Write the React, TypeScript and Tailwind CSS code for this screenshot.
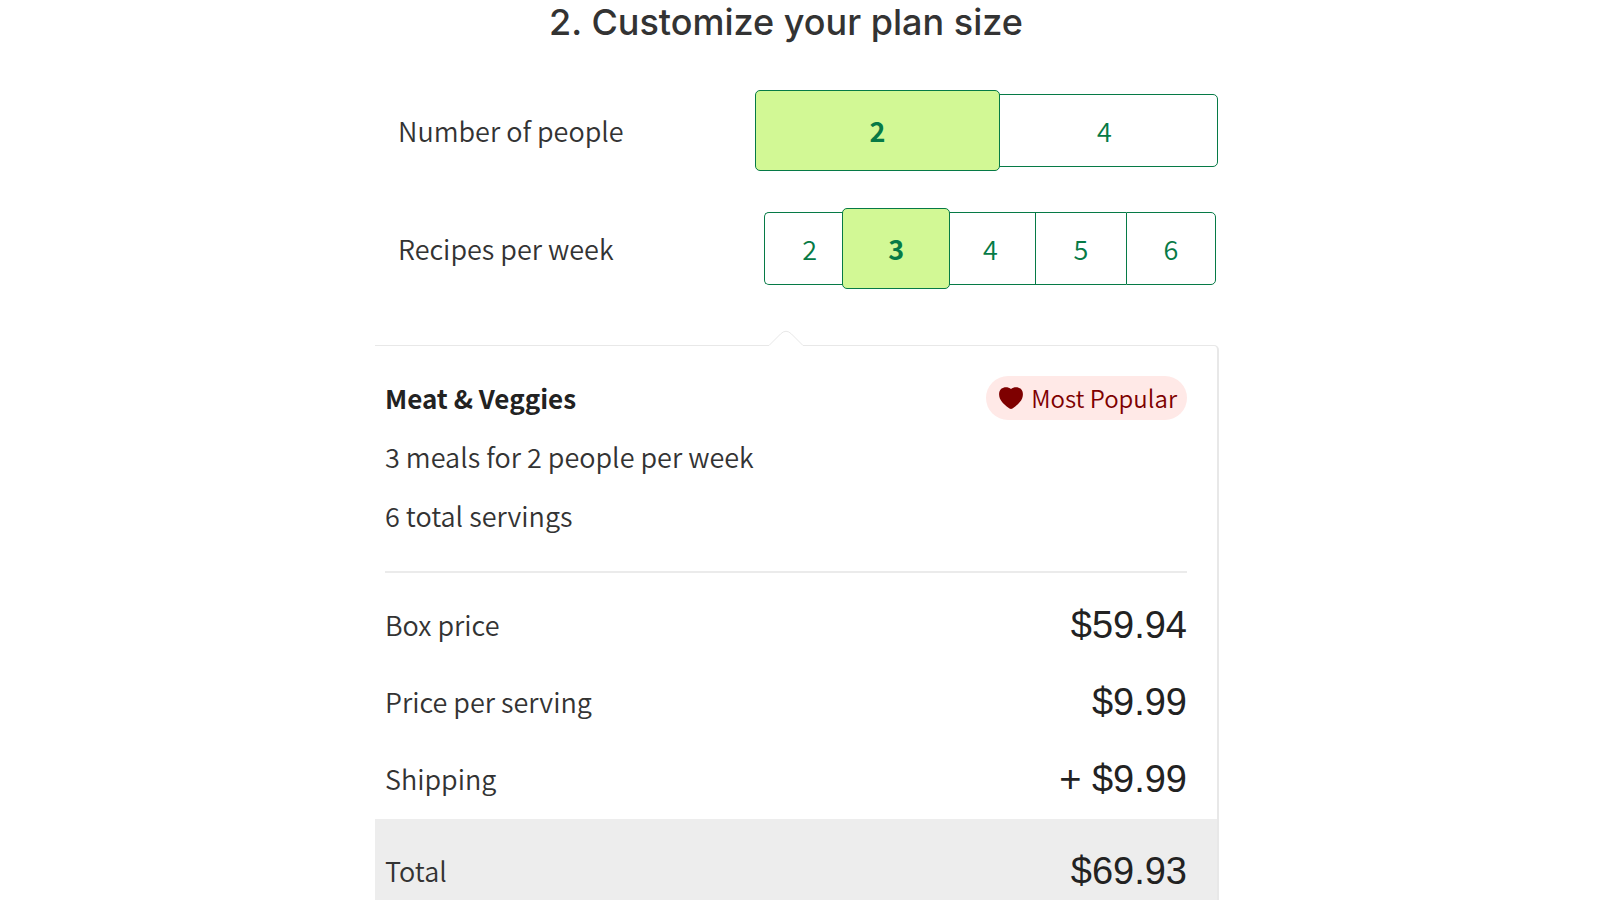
import { useState } from 'react';

const PEOPLE = [2, 4];
const RECIPES = [2, 3, 4, 5, 6];

const PRICES = [
  { label: 'Box price', value: '$59.94' },
  { label: 'Price per serving', value: '$9.99' },
  { label: 'Shipping', value: '+ $9.99' },
];

function PlanOptions({ label, name, options, value, onChange, barClass, selectedClass }) {
  return (
    <div role="radiogroup" aria-labelledby={`${name}-label`} className="flex items-center justify-between pl-[23px]">
      <span id={`${name}-label`}>{label}</span>
      <div className={`flex h-[73px] ${barClass}`}>
        {options.map((option) => {
          const selected = option === value;
          return (
            <div key={option} className="group flex min-w-0 flex-1">
              <label
                className={`relative flex flex-1 cursor-pointer items-center justify-center border-[#067a46] text-[#067a46] ${
                  selected
                    ? `z-10 -my-1 rounded-[5px] border bg-[#d2f895] font-bold ${selectedClass}`
                    : 'border-y border-l bg-white group-first:rounded-l-[5px] group-last:rounded-r-[5px] group-last:border-r'
                }`}
              >
                <input
                  type="radio"
                  name={name}
                  value={option}
                  checked={selected}
                  onChange={() => onChange(option)}
                  className="sr-only"
                />
                {option}
              </label>
            </div>
          );
        })}
      </div>
    </div>
  );
}

export default function App() {
  const [people, setPeople] = useState(2);
  const [recipes, setRecipes] = useState(3);

  return (
    <div className="min-h-screen bg-white pr-[6px] font-['Noto_Sans_CJK_SC',sans-serif] text-[27px] font-[350] leading-[40px] text-[#333]">
      <main className="mx-auto w-full max-w-[844px]">
        <h1 className="pr-[22px] text-center font-['Inter',sans-serif] text-[36px] font-medium leading-[44px] text-[#333]">
          2. Customize your plan size
        </h1>

        <div className="mt-[50px] flex flex-col gap-[45px]">
          <PlanOptions
            label="Number of people"
            name="people"
            options={PEOPLE}
            value={people}
            onChange={setPeople}
            barClass="w-[454px] mr-px"
            selectedClass="-mx-[9px]"
          />
          <PlanOptions
            label="Recipes per week"
            name="recipes"
            options={RECIPES}
            value={recipes}
            onChange={setRecipes}
            barClass="w-[452px] mr-[3px]"
            selectedClass="-ml-3 -mr-[5px]"
          />
        </div>

        {/* Summary */}
        <section className="relative mt-[60px] rounded-tr-[5px] border-r-2 border-t border-[#e8e8e8]">
          <svg className="absolute -top-4 right-[413px] h-[17px] w-9" viewBox="0 0 36 17" fill="none">
            <path d="M0 16 12 4Q18-2 24 4L36 16V17H0Z" fill="#fff" />
            <path d="M0 15.5H1L12.5 4Q18-1.500 23.500 4L35 15.500H36" stroke="#e8e8e8" />
          </svg>

          <div className="pl-[10px] pr-[30px] pt-[30px]">
            <div className="flex h-[44px] items-center justify-between">
              <h2 className="text-[26px] font-bold text-[#222]">Meat &amp; Veggies</h2>
              <span className="flex h-[44px] items-center gap-2 rounded-full bg-[#ffe9e7] pl-[13px] pr-[10px] text-[24px] text-[#7e0000]">
                <svg className="h-[22px] w-6" viewBox="0 0 24 22" fill="currentColor">
                  <path d="M12 2C9.500-.2 5-.5 2.200 1.800-.2 4-.4 8 .8 11.200 2.500 15.500 7 19 10.500 21.500Q12 22.400 13.500 21.500C17 19 21.500 15.500 23.200 11.200 24.400 8 24.200 4 21.800 1.800 19-.5 14.500-.2 12 2Z" />
                </svg>
                Most Popular
              </span>
            </div>
            <p className="mt-[17px]">3 meals for 2 people per week</p>
            <p className="mt-[19px]">6 total servings</p>
            <hr className="mt-[35px] border-t-2 border-[#ebebeb]" />
          </div>

          <dl>
            {PRICES.map((row) => (
              <div key={row.label} className="flex h-[77px] items-center justify-between pl-[10px] pr-[30px] first:mt-[13px]">
                <dt>{row.label}</dt>
                <dd className="font-['Liberation_Sans',sans-serif] text-[38px] font-normal text-[#222]">{row.value}</dd>
              </div>
            ))}
            <div className="mt-[2px] flex h-[82px] items-center justify-between bg-[#ededed] pl-[10px] pr-[30px] pt-[22px]">
              <dt>Total</dt>
              <dd className="font-['Liberation_Sans',sans-serif] text-[38px] font-normal text-[#222]">$69.93</dd>
            </div>
          </dl>
        </section>
      </main>
    </div>
  );
}
